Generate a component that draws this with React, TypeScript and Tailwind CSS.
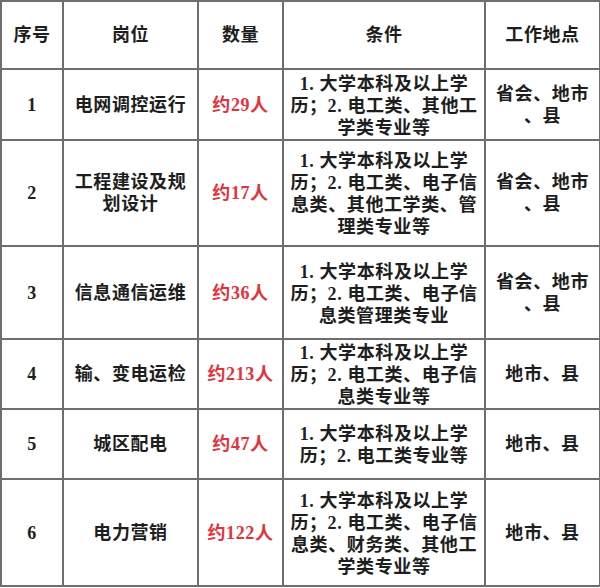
import React from "react";

type Row = {
  no: string;
  post: string[];
  count: string;
  cond: string[];
  loc: string[];
  h: string;
};

const rows: Row[] = [
  {
    no: "1",
    post: ["电网调控运行"],
    count: "约29人",
    cond: ["1. 大学本科及以上学", "历；2. 电工类、其他工", "学类专业等"],
    loc: ["省会、地市", "、县"],
    h: "h-[71px]",
  },
  {
    no: "2",
    post: ["工程建设及规", "划设计"],
    count: "约17人",
    cond: ["1. 大学本科及以上学", "历；2. 电工类、电子信", "息类、其他工学类、管", "理类专业等"],
    loc: ["省会、地市", "、县"],
    h: "h-[106px]",
  },
  {
    no: "3",
    post: ["信息通信运维"],
    count: "约36人",
    cond: ["1. 大学本科及以上学", "历；2. 电工类、电子信", "息类管理类专业"],
    loc: ["省会、地市", "、县"],
    h: "h-[93px]",
  },
  {
    no: "4",
    post: ["输、变电运检"],
    count: "约213人",
    cond: ["1. 大学本科及以上学", "历；2. 电工类、电子信", "息类专业等"],
    loc: ["地市、县"],
    h: "h-[70px]",
  },
  {
    no: "5",
    post: ["城区配电"],
    count: "约47人",
    cond: ["1. 大学本科及以上学", "历；2. 电工类专业等"],
    loc: ["地市、县"],
    h: "h-[70px]",
  },
  {
    no: "6",
    post: ["电力营销"],
    count: "约122人",
    cond: ["1. 大学本科及以上学", "历；2. 电工类、电子信", "息类、财务类、其他工", "学类专业等"],
    loc: ["地市、县"],
    h: "h-[107px]",
  },
];

const cell = "border-2 border-[#6e6e6e] text-center align-middle p-0";

function Lines({ items }: { items: string[] }) {
  return (
    <div className="flex flex-col items-center leading-[22px]">
      {items.map((t, i) => (
        <span key={i} className="whitespace-nowrap">
          {t}
        </span>
      ))}
    </div>
  );
}

export default function App() {
  return (
    <div className="w-[600px] h-[588px] bg-white font-['Liberation_Serif','Noto_Sans_CJK_SC',serif] text-[#1e1e1e] text-[18px] tracking-[0.6px] leading-[22px]">
      <table className="table-fixed border-collapse w-[599px]">
        <colgroup>
          <col className="w-[62px]" />
          <col className="w-[135px]" />
          <col className="w-[85px]" />
          <col className="w-[202px]" />
          <col className="w-[115px]" />
        </colgroup>
        <thead>
          <tr className="h-[68px] font-bold">
            <th className={cell}>序号</th>
            <th className={cell}>岗位</th>
            <th className={cell}>数量</th>
            <th className={cell}>条件</th>
            <th className={cell}>工作地点</th>
          </tr>
        </thead>
        <tbody className="font-semibold">
          {rows.map((r) => (
            <tr key={r.no} className={r.h}>
              <td className={`${cell} font-bold`}>{r.no}</td>
              <td className={cell}>
                <Lines items={r.post} />
              </td>
              <td className={`${cell} text-[#e3323b] whitespace-nowrap`}>{r.count}</td>
              <td className={cell}>
                <div className="pt-[2px]">
                  <Lines items={r.cond} />
                </div>
              </td>
              <td className={cell}>
                <Lines items={r.loc} />
              </td>
            </tr>
          ))}
        </tbody>
      </table>
    </div>
  );
}
